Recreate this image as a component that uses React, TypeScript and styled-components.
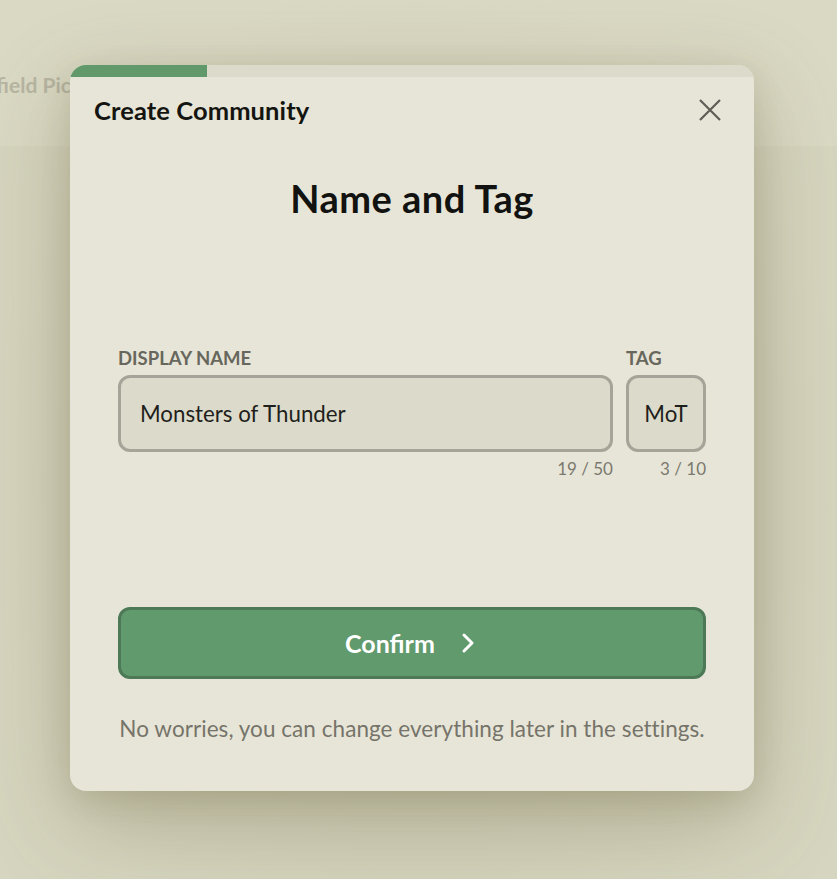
import React from "react";
import styled, { createGlobalStyle } from "styled-components";

const GlobalStyle = createGlobalStyle`
  html, body { margin: 0; padding: 0; }
  body {
    background: #d8d7c2;
    font-family: "Lato", "Noto Sans", sans-serif;
  }
  * { box-sizing: border-box; }
`;

const Page = styled.div`
  position: relative;
  width: 100%;
  height: 879px;
  overflow: hidden;
  background: #d6d5bf;
`;

const TopBar = styled.header`
  height: 146px;
  background: #dad9c4;
  display: flex;
  align-items: flex-start;
  padding-top: 72px;
`;

const SiteTitle = styled.div`
  margin-left: -63px;
  font-family: "Lato", sans-serif;
  font-weight: 700;
  font-size: 21px;
  color: #b7b5a2;
  white-space: nowrap;
`;

const Overlay = styled.div`
  position: absolute;
  inset: 0;
  display: flex;
  justify-content: flex-start;
  align-items: flex-start;
  padding: 65px 0 0 70px;
  background: radial-gradient(ellipse at 50% 55%, rgba(120, 115, 80, 0.12), rgba(120, 115, 80, 0) 75%);
`;

const Modal = styled.div`
  width: 684px;
  height: 726px;
  background: #e7e5d7;
  border-radius: 16px;
  overflow: hidden;
  display: flex;
  flex-direction: column;
  box-shadow: 0 30px 90px rgba(95, 90, 50, 0.32), 0 8px 30px rgba(95, 90, 50, 0.15);
`;

const ProgressTrack = styled.div`
  height: 12px;
  background: #dcdacb;
  flex: none;
`;

const ProgressFill = styled.div`
  height: 100%;
  background: #61996b;
  border-top-left-radius: 16px;
`;

const Header = styled.div`
  display: flex;
  justify-content: space-between;
  align-items: center;
  padding: 13px 32px 0 24px;
  height: 52px;
`;

const HeaderTitle = styled.h2`
  margin: 0;
  font-family: "Lato", sans-serif;
  font-weight: 700;
  font-size: 25.5px;
  color: #141410;
  letter-spacing: 0.1px;
`;

const CloseButton = styled.button`
  border: none;
  background: none;
  padding: 0;
  width: 24px;
  height: 24px;
  display: flex;
  align-items: center;
  justify-content: center;
  cursor: pointer;
  color: #5e5d56;
`;

const Body = styled.div`
  display: flex;
  flex-direction: column;
  padding: 0 48px;
  flex: 1;
`;

const StepTitle = styled.h1`
  margin: 46px 0 0;
  text-align: center;
  font-family: "Lato", sans-serif;
  font-weight: 700;
  font-size: 38px;
  letter-spacing: 0.5px;
  color: #121210;
  line-height: 46px;
`;

const Fields = styled.div`
  display: flex;
  gap: 13px;
  margin-top: 126px;
`;

const Field = styled.div<{ $grow?: boolean; $width?: number }>`
  display: flex;
  flex-direction: column;
  flex: ${(p) => (p.$grow ? "1" : "none")};
  width: ${(p) => (p.$width ? `${p.$width}px` : "auto")};
`;

const Label = styled.label`
  font-family: "Lato", sans-serif;
  font-weight: 700;
  font-size: 18.5px;
  line-height: 22px;
  color: #68675d;
  text-transform: uppercase;
  margin-bottom: 6px;
`;

const Input = styled.input<{ $center?: boolean }>`
  height: 77px;
  width: 100%;
  border: 3px solid #a6a499;
  border-radius: 12px;
  background: #dcdacb;
  padding: 0 ${(p) => (p.$center ? "0" : "19px")};
  text-align: ${(p) => (p.$center ? "center" : "left")};
  font-family: "Lato", sans-serif;
  font-size: 22.3px;
  color: #1f1f1b;
  outline: none;
`;

const Counter = styled.div`
  text-align: right;
  font-family: "Lato", sans-serif;
  font-size: 17px;
  color: #7b796f;
  margin-top: 6px;
`;

const ConfirmButton = styled.button`
  margin-top: 128px;
  height: 72px;
  width: 100%;
  border: 3px solid #4d7957;
  border-radius: 12px;
  background: #619a6c;
  color: #ffffff;
  display: flex;
  align-items: center;
  justify-content: center;
  gap: 26px;
  padding-right: 10px;
  font-family: "Lato", sans-serif;
  font-weight: 700;
  font-size: 25px;
  cursor: pointer;
`;

const Note = styled.p`
  margin: 36px 0 0;
  text-align: center;
  font-family: "Lato", sans-serif;
  font-size: 22.5px;
  letter-spacing: 0.05px;
  color: #76746a;
`;

export default function App() {
  const progress = 20;
  return (
    <>
      <GlobalStyle />
      <Page>
        <TopBar>
          <SiteTitle>Springfield Pickleball</SiteTitle>
        </TopBar>
        <Overlay>
          <Modal role="dialog" aria-label="Create Community">
            <ProgressTrack>
              <ProgressFill style={{ width: `${progress}%` }} />
            </ProgressTrack>
            <Header>
              <HeaderTitle>Create Community</HeaderTitle>
              <CloseButton aria-label="Close">
                <svg width="24" height="24" viewBox="0 0 24 24" fill="none" stroke="currentColor" strokeWidth="2.2" strokeLinecap="butt">
                  <path d="M2 2 L22 22 M22 2 L2 22" />
                </svg>
              </CloseButton>
            </Header>
            <Body>
              <StepTitle>Name and Tag</StepTitle>
              <Fields>
                <Field $grow>
                  <Label>Display Name</Label>
                  <Input defaultValue="Monsters of Thunder" />
                  <Counter>19 / 50</Counter>
                </Field>
                <Field $width={80}>
                  <Label>Tag</Label>
                  <Input $center defaultValue="MoT" />
                  <Counter>3 / 10</Counter>
                </Field>
              </Fields>
              <ConfirmButton>
                Confirm
                <svg width="14" height="24" viewBox="0 0 14 24" fill="none" stroke="currentColor" strokeWidth="3" strokeLinecap="round" strokeLinejoin="round">
                  <path d="M3 4 L11 12 L3 20" />
                </svg>
              </ConfirmButton>
              <Note>No worries, you can change everything later in the settings.</Note>
            </Body>
          </Modal>
        </Overlay>
      </Page>
    </>
  );
}
